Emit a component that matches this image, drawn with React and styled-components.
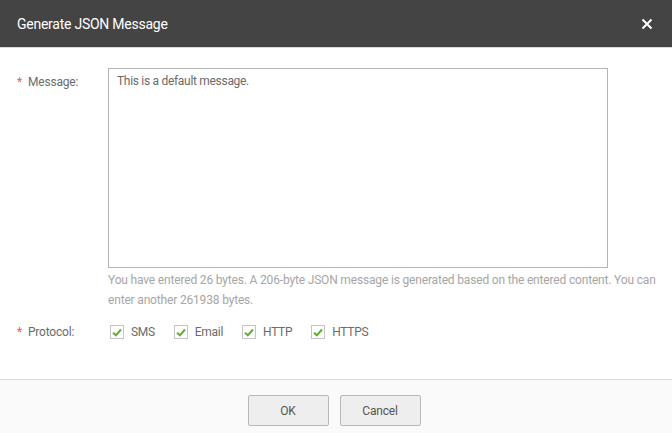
import { useState } from 'react';
import styled, { createGlobalStyle } from 'styled-components';

const GlobalStyle = createGlobalStyle`
  html, body {
    margin: 0;
    padding: 0;
    background: #fff;
  }
  body {
    font-family: Roboto, "Liberation Sans", Arial, sans-serif;
  }
`;

const Dialog = styled.div`
  width: 672px;
  height: 433px;
  display: flex;
  flex-direction: column;
  background: #fff;
`;

const Header = styled.div`
  height: 48px;
  flex-shrink: 0;
  background: #444444;
  border-bottom: 1px solid #d9d9d9;
  box-sizing: border-box;
  display: flex;
  align-items: center;
  justify-content: space-between;
  padding: 0 17px;
`;

const Title = styled.h1`
  margin: 0;
  font-size: 14px;
  font-weight: 400;
  color: #fff;
  letter-spacing: -0.25px;
`;

const CloseButton = styled.button`
  border: none;
  background: none;
  padding: 0;
  width: 14px;
  height: 14px;
  display: flex;
  align-items: center;
  justify-content: center;
  cursor: pointer;
  margin-right: 1px;
`;

const Body = styled.div`
  flex: 1;
  padding: 20px 12px 0 17px;
  display: flex;
  flex-direction: column;
  gap: 15px;
`;

const Row = styled.div`
  display: grid;
  grid-template-columns: 91px 1fr;
  align-items: ${({ $center }) => ($center ? 'center' : 'start')};
`;

const Label = styled.label`
  font-size: 12px;
  color: #6b6b6b;
  letter-spacing: -0.2px;
  padding-top: ${({ $top }) => $top || 0}px;
  display: flex;
  gap: 6px;
`;

const Required = styled.span`
  color: #f0585e;
`;

const Field = styled.div`
  display: flex;
  flex-direction: column;
`;

const TextArea = styled.textarea`
  width: 500px;
  height: 200px;
  box-sizing: border-box;
  border: 1px solid #b3b3b3;
  border-radius: 0;
  padding: 5px 8px;
  font-family: inherit;
  font-size: 12px;
  letter-spacing: -0.3px;
  color: #6b6b6b;
  resize: none;
  outline: none;
  margin: 0;
`;

const Hint = styled.p`
  margin: 2px 0 0;
  font-size: 12px;
  line-height: 20px;
  color: #a6a6a6;
  letter-spacing: -0.17px;
`;

const Checks = styled.div`
  display: flex;
  gap: 19px;
  padding-left: 2px;
`;

const CheckItem = styled.label`
  display: flex;
  align-items: center;
  gap: 7px;
  font-size: 12px;
  letter-spacing: -0.3px;
  color: #6b6b6b;
  cursor: pointer;
`;

const Box = styled.span`
  width: 14px;
  height: 14px;
  box-sizing: border-box;
  border: 1px solid #c4c4c4;
  background: #fff;
  display: flex;
  align-items: center;
  justify-content: center;
`;

const Footer = styled.div`
  height: 54px;
  flex-shrink: 0;
  box-sizing: border-box;
  border-top: 1px solid #dcdcdc;
  background: #fafafa;
  display: flex;
  justify-content: center;
  gap: 11px;
  padding: 15px 4px 0 0;
`;

const Button = styled.button`
  width: 81px;
  height: 31px;
  box-sizing: border-box;
  border: 1px solid #b8b8b8;
  border-radius: 2px;
  background: #eeeeee;
  color: #555;
  font-family: inherit;
  font-size: 12px;
  letter-spacing: -0.2px;
  cursor: pointer;
`;

function Check({ label, checked, onToggle }) {
  return (
    <CheckItem onClick={onToggle}>
      <Box>
        {checked && (
          <svg width="10" height="9" viewBox="0 0 10 9">
            <path d="M1 4.6 L3.8 7.3 L9 1.5" fill="none" stroke="#5aae2c" strokeWidth="2" />
          </svg>
        )}
      </Box>
      {label}
    </CheckItem>
  );
}

export default function App() {
  const [message, setMessage] = useState('This is a default message.');
  const [protocols, setProtocols] = useState({ SMS: true, Email: true, HTTP: true, HTTPS: true });

  const toggle = (name) => setProtocols((p) => ({ ...p, [name]: !p[name] }));

  return (
    <Dialog>
      <GlobalStyle />
      <Header>
        <Title>Generate JSON Message</Title>
        <CloseButton aria-label="close">
          <svg width="12" height="12" viewBox="0 0 12 12">
            <path d="M1.5 1.5 L10.5 10.5 M10.5 1.5 L1.5 10.5" stroke="#fff" strokeWidth="2" />
          </svg>
        </CloseButton>
      </Header>
      <Body>
        <Row>
          <Label $top={7}>
            <Required>*</Required>Message:
          </Label>
          <Field>
            <TextArea value={message} onChange={(e) => setMessage(e.target.value)} />
            <Hint>
              You have entered 26 bytes. A 206-byte JSON message is generated based on the entered content. You can
              enter another 261938 bytes.
            </Hint>
          </Field>
        </Row>
        <Row $center>
          <Label>
            <Required>*</Required>Protocol:
          </Label>
          <Checks>
            {Object.keys(protocols).map((name) => (
              <Check key={name} label={name} checked={protocols[name]} onToggle={() => toggle(name)} />
            ))}
          </Checks>
        </Row>
      </Body>
      <Footer>
        <Button>OK</Button>
        <Button>Cancel</Button>
      </Footer>
    </Dialog>
  );
}
